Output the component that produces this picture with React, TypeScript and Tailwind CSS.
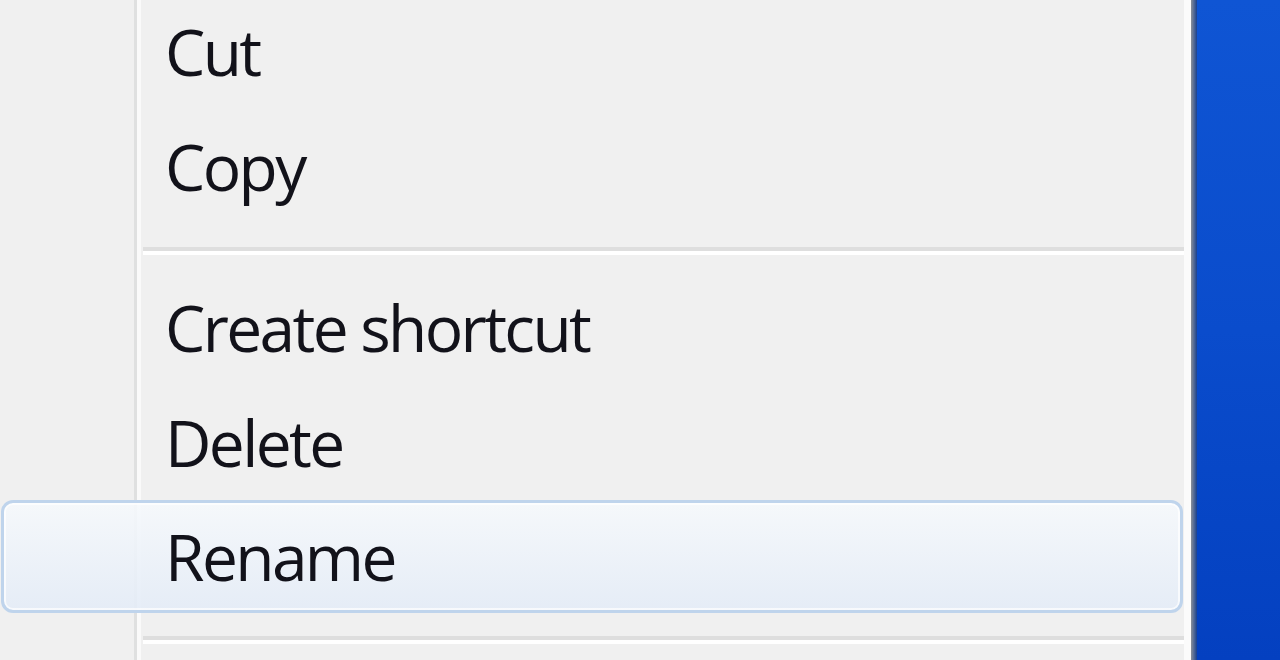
import React from "react";

const font = { fontFamily: '"Open Sans", "Noto Sans", sans-serif' };

function Item({ label }: { label: string }) {
  return (
    <div className="flex h-[115px] shrink-0 items-center pl-[165px] text-[64px] leading-none font-medium tracking-[-2.6px] text-[#12121a]">
      {label}
    </div>
  );
}

function Separator() {
  return (
    <div className="flex h-[46px] shrink-0 flex-col pl-[143px] pt-[23px]">
      <div className="h-[4px] bg-[#dedede]" />
      <div className="h-[4px] bg-white" />
    </div>
  );
}

export default function App() {
  return (
    <div className="flex h-[660px] w-[1280px] overflow-hidden bg-[#f0f0f0]" style={font}>
      <div className="relative flex flex-1 flex-col">
        {/* icon gutter */}
        <div className="absolute inset-y-0 left-[134px] flex">
          <div className="w-[3px] bg-[#dfe0e0]" />
          <div className="w-[4px] bg-[#fafafa]" />
        </div>
        <div className="relative -mt-[6px] flex flex-col">
          <Item label="Cut" />
          <Item label="Copy" />
          <Separator />
          <Item label="Create shortcut" />
          <Item label="Delete" />
          <div className="mx-[1px] flex h-[113px] shrink-0 items-center rounded-[12px] border-[3px] border-[#bfd4ec] bg-gradient-to-b from-[#f6f9fc]/90 to-[#e4ecf7]/90 pl-[161px] text-[64px] leading-none font-medium tracking-[-2.6px] text-[#12121a] shadow-[inset_0_0_0_2px_rgba(255,255,255,0.7)]">
            Rename
          </div>
          <Separator />
        </div>
      </div>
      {/* menu border */}
      <div className="w-[7px] bg-[#fbfbfb]" />
      <div className="w-[6px] bg-gradient-to-r from-[#8a8f98] to-[#1a3f8c]" />
      {/* desktop behind */}
      <div className="w-[83px] bg-gradient-to-b from-[#0f55d4] via-[#0a4ccc] to-[#0440c0]" />
    </div>
  );
}
